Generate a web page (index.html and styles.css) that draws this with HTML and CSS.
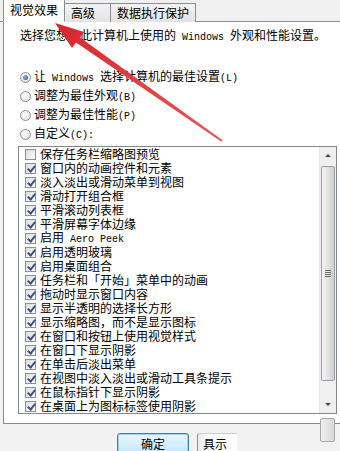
FILE: index.html
```html
<!DOCTYPE html>
<html lang="zh-CN">
<head>
<meta charset="utf-8">
<title>性能选项</title>
<link rel="stylesheet" href="styles.css">
</head>
<body>
<div class="dialog">
  <div class="tabs">
    <div class="tab active">视觉效果</div>
    <div class="tab">高级</div>
    <div class="tab">数据执行保护</div>
  </div>
  <div class="panel">
    <p class="desc">选择您想在此计算机上使用的<span class="en"> Windows </span>外观和性能设置。</p>
    <div class="radios">
      <div class="radio-row"><span class="radio on"></span><span class="label">让<span class="en"> Windows </span>选择计算机的最佳设置<span class="en">(L)</span></span></div>
      <div class="radio-row"><span class="radio"></span><span class="label">调整为最佳外观<span class="en">(B)</span></span></div>
      <div class="radio-row"><span class="radio"></span><span class="label">调整为最佳性能<span class="en">(P)</span></span></div>
      <div class="radio-row"><span class="radio"></span><span class="label">自定义<span class="en">(C):</span></span></div>
    </div>
    <div class="listbox">
      <ul class="items">
        <li><span class="check"></span><span class="label">保存任务栏缩略图预览</span></li>
        <li><span class="check on"></span><span class="label">窗口内的动画控件和元素</span></li>
        <li><span class="check on"></span><span class="label">淡入淡出或滑动菜单到视图</span></li>
        <li><span class="check on"></span><span class="label">滑动打开组合框</span></li>
        <li><span class="check on"></span><span class="label">平滑滚动列表框</span></li>
        <li><span class="check on"></span><span class="label">平滑屏幕字体边缘</span></li>
        <li><span class="check on"></span><span class="label">启用<span class="en"> Aero Peek</span></span></li>
        <li><span class="check on"></span><span class="label">启用透明玻璃</span></li>
        <li><span class="check on"></span><span class="label">启用桌面组合</span></li>
        <li><span class="check on"></span><span class="label">任务栏和「开始」菜单中的动画</span></li>
        <li><span class="check on"></span><span class="label">拖动时显示窗口内容</span></li>
        <li><span class="check on"></span><span class="label">显示半透明的选择长方形</span></li>
        <li><span class="check on"></span><span class="label">显示缩略图，而不是显示图标</span></li>
        <li><span class="check on"></span><span class="label">在窗口和按钮上使用视觉样式</span></li>
        <li><span class="check on"></span><span class="label">在窗口下显示阴影</span></li>
        <li><span class="check on"></span><span class="label">在单击后淡出菜单</span></li>
        <li><span class="check on"></span><span class="label">在视图中淡入淡出或滑动工具条提示</span></li>
        <li><span class="check on"></span><span class="label">在鼠标指针下显示阴影</span></li>
        <li><span class="check on"></span><span class="label">在桌面上为图标标签使用阴影</span></li>
      </ul>
      <div class="scrollbar">
        <div class="sb-btn"><span class="tri up"></span></div>
        <div class="sb-track"><div class="thumb"><span class="grip"></span></div></div>
        <div class="sb-btn"><span class="tri down"></span></div>
      </div>
    </div>
  </div>
  <div class="buttons">
    <div class="btn default">确定</div>
    <div class="btn partial">具示</div>
  </div>
  <div class="outer-scroll"></div>
  <svg class="arrow" width="340" height="451" viewBox="0 0 340 451">
    <defs>
      <linearGradient id="ag" x1="0" y1="0" x2="1" y2="1">
        <stop offset="0" stop-color="#d8262b"/>
        <stop offset="1" stop-color="#e8585a"/>
      </linearGradient>
    </defs>
    <polygon points="55,23 84,32 80,37.5 222.6,140.2 221.4,141.8 76,42.5 72,48" fill="url(#ag)"/>
  </svg>
</div>
</body>
</html>
```

FILE: styles.css
```css
* { box-sizing: border-box; }

html, body {
  margin: 0;
  padding: 0;
}

body {
  width: 340px;
  height: 451px;
  overflow: hidden;
  background: #f2f2f2;
  font-family: "Noto Sans CJK SC", "Noto Sans", sans-serif;
  font-size: 12px;
  color: #000;
}

.dialog {
  position: relative;
  width: 340px;
  height: 451px;
}

.en {
  font-family: "Liberation Mono", monospace;
  font-size: 10px;
  white-space: pre;
}

.label {
  white-space: nowrap;
}

/* tabs */
.tabs {
  display: flex;
  align-items: flex-end;
  height: 22px;
  padding-left: 3px;
  background: #f0f0f0;
  border-bottom: 1px solid #898c95;
}

.tab {
  height: 19px;
  line-height: 18px;
  padding: 0 6px;
  margin-bottom: -1px;
  border: 1px solid #898c95;
  border-bottom: none;
  border-left: none;
  background: linear-gradient(#f3f3f3, #e3e3e3);
}

.tab:nth-child(2) { width: 46px; }
.tab:nth-child(3) { width: 85px; }

.tab.active {
  height: 23px;
  width: 62px;
  line-height: 20px;
  background: #fff;
  border-left: 1px solid #898c95;
  border-bottom: 1px solid #fff;
  padding-left: 6px;
  position: relative;
  z-index: 1;
}

/* panel */
.panel {
  margin-left: 3px;
  width: 345px;
  height: 402px;
  background: #fff;
  border-left: 1px solid #898c95;
  border-bottom: 1px solid #898c95;
  padding-top: 5px;
}

.desc {
  margin: 0 0 0 16px;
  line-height: 16px;
  white-space: nowrap;
}

.radios {
  margin-top: 22px;
  padding-left: 16px;
}

.radio-row {
  display: flex;
  align-items: center;
  height: 19px;
  line-height: 14px;
}

.radio {
  width: 11px;
  height: 11px;
  border-radius: 50%;
  border: 1px solid #8e8f8f;
  background: radial-gradient(circle at 40% 35%, #fff, #dcdcdc);
  margin-right: 3px;
  flex: none;
  position: relative;
}

.radio.on::after {
  content: "";
  position: absolute;
  left: 2px;
  top: 2px;
  width: 5px;
  height: 5px;
  border-radius: 50%;
  background: radial-gradient(circle at 35% 35%, #8fb6e8, #1f4e9a);
}

/* listbox */
.listbox {
  display: flex;
  margin: 2px 0 0 14px;
  width: 319px;
  height: 268px;
  border: 1px solid #828790;
  background: #fff;
}

.items {
  flex: 1;
  list-style: none;
  margin: 0;
  padding: 0;
}

.items li {
  display: flex;
  align-items: center;
  height: 14px;
  line-height: 14px;
  padding-left: 6px;
}

.check {
  width: 11px;
  height: 11px;
  flex: none;
  margin-right: 4px;
  border: 1px solid #8e8f8f;
  background: linear-gradient(135deg, #dcdcdc, #fdfdfd);
  position: relative;
}

.check.on::after {
  content: "";
  position: absolute;
  left: 2.5px;
  top: 0;
  width: 3px;
  height: 6px;
  border: solid #3b4f8c;
  border-width: 0 2px 2px 0;
  transform: rotate(40deg);
}

/* scrollbar */
.scrollbar {
  width: 17px;
  flex: none;
  display: flex;
  flex-direction: column;
  background: #f0f0f0;
  border-left: 1px solid #e6e6e6;
}

.sb-btn {
  height: 17px;
  display: flex;
  align-items: center;
  justify-content: center;
}

.tri {
  width: 0;
  height: 0;
  border-left: 3px solid transparent;
  border-right: 3px solid transparent;
}

.tri.up { border-bottom: 3px solid #444; }
.tri.down { border-top: 3px solid #444; }

.sb-track {
  flex: 1;
  padding: 2px 0 15px 1px;
}

.thumb {
  height: 100%;
  width: 14px;
  border: 1px solid #9a9ea6;
  border-radius: 2px;
  background: linear-gradient(90deg, #f4f4f4, #dedede 60%, #d0d0d0);
  display: flex;
  align-items: center;
  justify-content: center;
}

.grip {
  width: 6px;
  height: 7px;
  background: repeating-linear-gradient(#6a6a6a 0 1px, transparent 1px 2px);
}

/* buttons */
.buttons {
  display: flex;
  margin-top: 9px;
  padding-left: 117px;
  gap: 8px;
}

.btn {
  height: 24px;
  line-height: 20px;
  text-align: center;
}

.btn.default {
  width: 72px;
  border: 1px solid #3c7fb1;
  border-radius: 3px;
  background: linear-gradient(#eaf6fd, #bee6fd);
  box-shadow: inset 0 0 0 1px #9cd4f6;
}

.btn.partial {
  width: 40px;
  text-align: left;
  padding-left: 5px;
  border-left: 1px solid #8f8f8f;
  border-top: 1px solid #cfcfcf;
  border-radius: 3px 0 0 0;
  background: linear-gradient(90deg, #ececec, #fff 30%);
}

/* overlay artifacts */
.outer-scroll {
  position: absolute;
  left: 320px;
  top: 418px;
  width: 15px;
  height: 24px;
  border: 1px solid #a8a8a8;
  border-radius: 2px;
  background: linear-gradient(90deg, #f0f0f0, #d8d8d8);
}

.arrow {
  position: absolute;
  left: 0;
  top: 0;
  pointer-events: none;
}
```
